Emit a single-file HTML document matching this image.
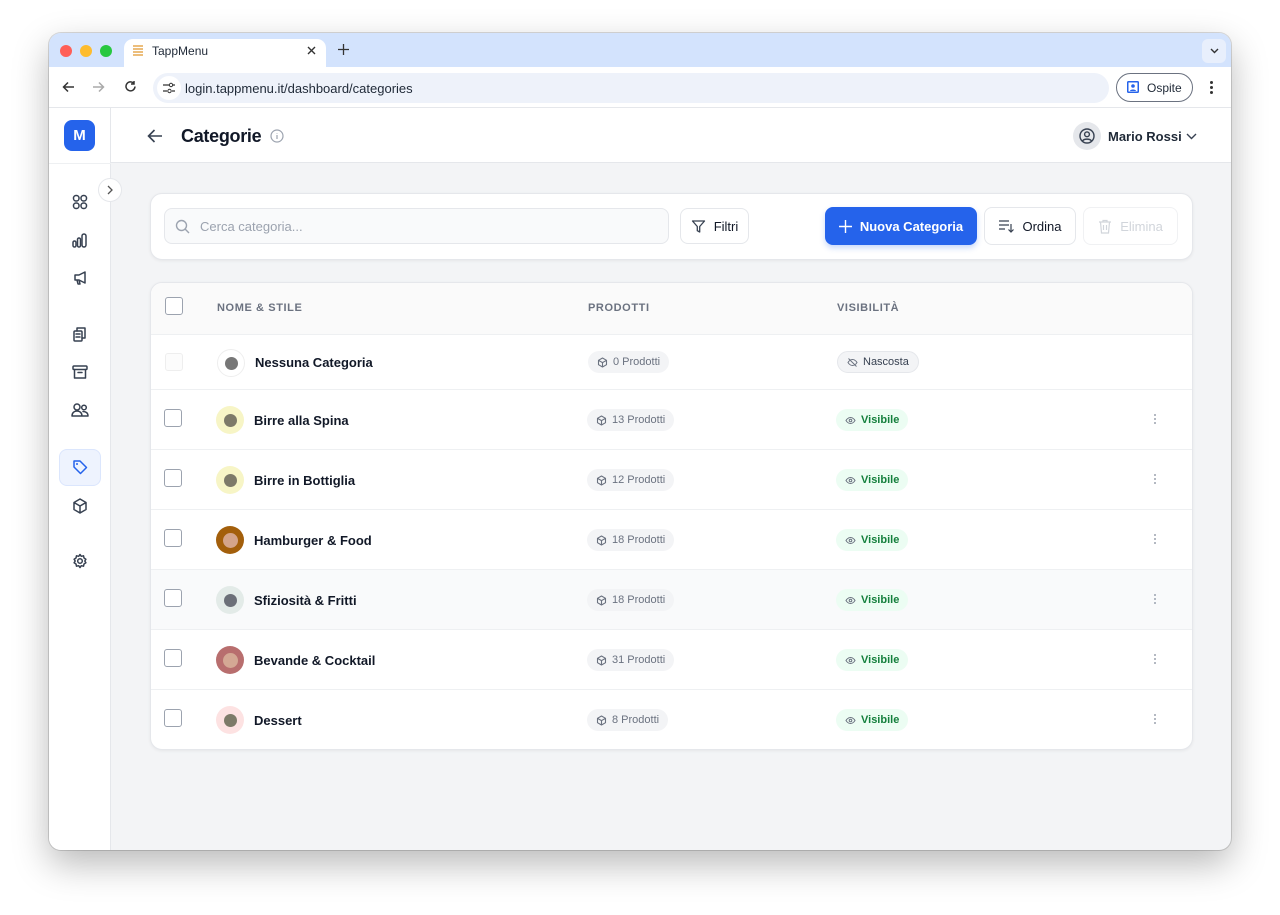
<!DOCTYPE html>
<html><head><meta charset="utf-8"><style>
*{box-sizing:border-box;margin:0;padding:0}
body{width:1280px;height:915px;background:#fff;font-family:"Liberation Sans",sans-serif;position:relative;overflow:hidden;color:#111827}
.a{position:absolute}
.win{left:49px;top:33px;width:1182px;height:817px;border-radius:12px;overflow:hidden;background:#f3f4f6;box-shadow:0 14px 36px rgba(0,0,0,.28),0 0 0 1px rgba(0,0,0,.14)}
svg{display:block}
.ic{stroke:#374151;fill:none;stroke-width:1.5;stroke-linecap:round;stroke-linejoin:round}
.card{background:#fff;border:1px solid #e5e7eb;border-radius:12px;box-shadow:0 1px 3px rgba(0,0,0,.06)}
.btn{border:1px solid #e5e7eb;border-radius:8px;background:#fff;display:flex;align-items:center;justify-content:center;gap:8px;font-size:13px;font-weight:bold;color:#111827}
.row{position:absolute;left:0;width:1043px;border-top:1px solid #eef0f2}
.cb{position:absolute;left:14px;width:18px;height:18px;border:1.5px solid #9ca3af;border-radius:3px;background:#fff}
.dot{position:absolute;left:66px;width:28px;height:28px;border-radius:50%;display:flex;align-items:center;justify-content:center}
.dot i{width:13px;height:13px;border-radius:50%;display:block}
.nm{position:absolute;left:104px;font-size:13px;font-weight:bold;color:#111827}
.pill{position:absolute;height:22px;border-radius:11px;display:flex;align-items:center;gap:5px;padding:0 9px;font-size:11px}
.pr{left:437px;background:#f3f4f6;color:#6b7280}
.vis{left:686px;background:#ecfdf3;color:#15803d;font-weight:bold}
.dots{position:absolute;left:1004px;width:4px}
.dots b{display:block;width:2px;height:2px;background:#9ca3af;border-radius:1px;margin:0 0 2px 0}
.r2{position:absolute;left:151px;width:1041px;height:60px;border-top:1px solid #eef0f2}
.r2 .cb{left:13px}.r2 .dot{left:65px}.r2 .nm{left:103px}.r2 .pr{left:436px}.r2 .vis{left:685px}.r2 .dots{left:1003px}
</style></head><body>
<div class="a win">
 <div class="a" style="left:0;top:0;width:1182px;height:34px;background:#d3e3fd"></div>
 <div class="a" style="left:11px;top:12px;width:12px;height:12px;border-radius:50%;background:#ff5f57"></div>
 <div class="a" style="left:31px;top:12px;width:12px;height:12px;border-radius:50%;background:#febc2e"></div>
 <div class="a" style="left:51px;top:12px;width:12px;height:12px;border-radius:50%;background:#28c840"></div>
 <div class="a" style="left:75px;top:6px;width:202px;height:30px;background:#fff;border-radius:9px 9px 0 0"></div>
 <svg class="a" style="left:83px;top:11px" width="12" height="12"><path d="M1 2h10M1 5h10M1 8h10M1 11h10" stroke="#e0962e" stroke-width="1.2"/></svg>
 <div class="a" style="left:103px;top:11px;font-size:12px;color:#1f2937">TappMenu</div>
 <svg class="a" style="left:258px;top:13px" width="9" height="9"><path d="M1 1l7 7M8 1l-7 7" stroke="#333" stroke-width="1.4"/></svg>
 <svg class="a" style="left:289px;top:11px" width="11" height="11"><path d="M5.5 0v11M0 5.5h11" stroke="#333" stroke-width="1.3"/></svg>
 <div class="a" style="left:1153px;top:6px;width:24px;height:24px;border-radius:6px;background:#e8effc"></div>
 <svg class="a" style="left:1161px;top:15px" width="9" height="6"><path d="M1 1l3.5 3.5L8 1" stroke="#333" stroke-width="1.4" fill="none"/></svg>
 <div class="a" style="left:0;top:34px;width:1182px;height:41px;background:#fff;border-bottom:1px solid #e5e7eb"></div>
 <svg class="a" style="left:13px;top:48px" width="13" height="12"><path d="M12 6H1.5M6 1.5L1.5 6 6 10.5" stroke="#333" stroke-width="1.5" fill="none"/></svg>
 <svg class="a" style="left:43px;top:48px" width="13" height="12"><path d="M1 6h10.5M7 1.5L11.5 6 7 10.5" stroke="#aaa" stroke-width="1.5" fill="none"/></svg>
 <svg class="a" style="left:75px;top:47px" width="13" height="13"><path d="M11 6.5A4.5 4.5 0 1 1 9.5 3M10 1v3H7" stroke="#333" stroke-width="1.5" fill="none"/></svg>
 <div class="a" style="left:104px;top:40px;width:956px;height:30px;border-radius:15px;background:#eef2fa"></div>
 <div class="a" style="left:108px;top:43px;width:24px;height:24px;border-radius:12px;background:#fff"></div>
 <svg class="a" style="left:113px;top:49px" width="14" height="12"><path d="M1 3h6M1 9h4M10 9h3M11 3h2" stroke="#333" stroke-width="1.3"/><circle cx="9" cy="3" r="1.7" stroke="#333" fill="none"/><circle cx="7.5" cy="9" r="1.7" stroke="#333" fill="none"/></svg>
 <div class="a" style="left:136px;top:48px;font-size:13px;color:#1f2937">login.tappmenu.it/dashboard/categories</div>
 <div class="a" style="left:1067px;top:40px;width:77px;height:29px;border:1px solid #6b7280;border-radius:15px"></div>
 <svg class="a" style="left:1077px;top:47px" width="14" height="14"><rect x="1" y="1" width="12" height="12" rx="1.5" fill="#2563eb"/><rect x="2.5" y="2.5" width="9" height="9" fill="#fff"/><circle cx="7" cy="6" r="1.8" fill="#2563eb"/><path d="M4 11c0-2 6-2 6 0z" fill="#2563eb"/></svg>
 <div class="a" style="left:1098px;top:48px;font-size:12px;color:#1f2937">Ospite</div>
 <div class="a" style="left:1161px;top:48px;width:3px"><div style="width:3px;height:3px;background:#333;border-radius:2px;margin-bottom:2px"></div><div style="width:3px;height:3px;background:#333;border-radius:2px;margin-bottom:2px"></div><div style="width:3px;height:3px;background:#333;border-radius:2px"></div></div>
 <div class="a" style="left:0;top:75px;width:62px;height:742px;background:#fff;border-right:1px solid #e5e7eb"></div>
 <div class="a" style="left:0;top:130px;width:62px;border-top:1px solid #eef0f2"></div>
 <div class="a" style="left:15px;top:87px;width:31px;height:31px;border-radius:8px;background:#2563eb;color:#fff;font-weight:bold;font-size:15px;display:flex;align-items:center;justify-content:center">M</div>
 <div class="a" style="left:49px;top:145px;width:24px;height:24px;border-radius:12px;background:#fff;border:1px solid #e5e7eb"></div>
 <svg class="a" style="left:57px;top:152px" width="8" height="10"><path d="M2 1l4 4-4 4" stroke="#555" stroke-width="1.3" fill="none"/></svg>
 <svg class="a ic" style="left:23px;top:161px" width="16" height="16"><rect x="1.5" y="1.5" width="5.5" height="5.5" rx="2.5"/><rect x="9" y="1.5" width="5.5" height="5.5" rx="2.5"/><rect x="1.5" y="9" width="5.5" height="5.5" rx="2.5"/><rect x="9" y="9" width="5.5" height="5.5" rx="2.5"/></svg>
 <svg class="a ic" style="left:23px;top:199px" width="16" height="16"><rect x="1" y="9" width="3" height="6" rx="1.5"/><rect x="5.5" y="6" width="3" height="9" rx="1.5"/><rect x="10" y="2" width="4" height="13" rx="2"/></svg>
 <svg class="a ic" style="left:23px;top:237px" width="16" height="16"><path d="M3 5h4l6-3v11l-6-3H3zM5 10l1 4h2l-1-4"/></svg>
 <svg class="a ic" style="left:23px;top:293px" width="16" height="16"><rect x="2" y="5" width="8" height="10" rx="1"/><path d="M5 5V2h8v10h-3M4 8h4M4 11h4"/></svg>
 <svg class="a ic" style="left:23px;top:331px" width="16" height="16"><rect x="1" y="2" width="14" height="3.5" rx="1"/><path d="M2.5 5.5V14h11V5.5M6 8.5h4"/></svg>
 <svg class="a ic" style="left:22px;top:369px" width="18" height="16"><circle cx="6" cy="5" r="3"/><circle cx="13" cy="5.5" r="2.3"/><path d="M1 14c0-3.5 2.5-5 5-5s5 1.5 5 5zM12 9.5c3 0 5 1.5 5 4.5h-5"/></svg>
 <div class="a" style="left:10px;top:416px;width:42px;height:37px;border-radius:8px;background:#eef3fe;border:1px solid #dbe6fd"></div>
 <svg class="a" style="left:23px;top:426px" width="16" height="16"><path d="M2 2h6l6.5 6.5-6 6L2 8z" stroke="#2563eb" stroke-width="1.5" fill="none" stroke-linejoin="round"/><circle cx="5" cy="5" r="1" fill="#2563eb"/></svg>
 <svg class="a ic" style="left:23px;top:465px" width="16" height="16"><path d="M8 1l6 3.5v7L8 15l-6-3.5v-7zM2 4.5L8 8l6-3.5M8 8v7"/></svg>
 <svg class="a ic" style="left:23px;top:520px" width="16" height="16"><circle cx="8" cy="8" r="2.3"/><path d="M8 1.5l1.3 1.8 2.2-.5.5 2.2 1.9 1.2-1.1 1.8 1.1 1.8-1.9 1.2-.5 2.2-2.2-.5L8 14.5l-1.3-1.8-2.2.5-.5-2.2-1.9-1.2L3.2 8 2.1 6.2 4 5l.5-2.2 2.2.5z"/></svg>
 <div class="a" style="left:62px;top:75px;width:1120px;height:55px;background:#fff;border-bottom:1px solid #e5e7eb"></div>
 <svg class="a" style="left:98px;top:96px" width="16" height="14"><path d="M15 7H1.5M7.5 1L1.5 7l6 6" stroke="#374151" stroke-width="1.6" fill="none"/></svg>
 <div class="a" style="left:132px;top:93px;font-size:18px;font-weight:bold;color:#111827;letter-spacing:-.3px">Categorie</div>
 <svg class="a" style="left:221px;top:96px" width="14" height="14"><circle cx="7" cy="7" r="6" stroke="#9ca3af" fill="none" stroke-width="1.2"/><path d="M7 6v4M7 4v.5" stroke="#9ca3af" stroke-width="1.2"/></svg>
 <div class="a" style="left:1024px;top:89px;width:28px;height:28px;border-radius:14px;background:#e5e7eb"></div>
 <svg class="a" style="left:1030px;top:95px" width="16" height="16"><circle cx="8" cy="8" r="7" stroke="#374151" fill="none" stroke-width="1.4"/><circle cx="8" cy="6.3" r="2.4" stroke="#374151" fill="none" stroke-width="1.4"/><path d="M3.5 13c1.5-2.5 7.5-2.5 9 0" stroke="#374151" fill="none" stroke-width="1.4"/></svg>
 <div class="a" style="left:1059px;top:96px;font-size:13px;font-weight:bold;color:#1f2937">Mario Rossi</div>
 <svg class="a" style="left:1137px;top:100px" width="11" height="7"><path d="M1 1l4.5 4.5L10 1" stroke="#374151" stroke-width="1.4" fill="none"/></svg>
 <div class="a card" style="left:101px;top:160px;width:1043px;height:67px"></div>
 <div class="a" style="left:115px;top:175px;width:505px;height:36px;border:1px solid #e5e7eb;border-radius:8px;background:#f9fafb"></div>
 <svg class="a" style="left:126px;top:186px" width="15" height="15"><circle cx="6.5" cy="6.5" r="5" stroke="#9ca3af" fill="none" stroke-width="1.4"/><path d="M10.3 10.3L14 14" stroke="#9ca3af" stroke-width="1.4"/></svg>
 <div class="a" style="left:151px;top:186px;font-size:13px;color:#9ca3af">Cerca categoria...</div>
 <div class="a btn" style="left:631px;top:175px;width:69px;height:36px"><svg width="15" height="15"><path d="M1.5 2h12l-4.8 5.5V13l-2.4-1.3V7.5z" stroke="#374151" fill="none" stroke-width="1.3" stroke-linejoin="round"/></svg><span style="font-weight:normal;color:#111827">Filtri</span></div>
 <div class="a btn" style="left:776px;top:174px;width:152px;height:38px;background:#2563eb;border-color:#2563eb;color:#fff;box-shadow:0 3px 6px rgba(37,99,235,.25)"><svg width="13" height="13"><path d="M6.5 0v13M0 6.5h13" stroke="#fff" stroke-width="1.4"/></svg>Nuova Categoria</div>
 <div class="a btn" style="left:935px;top:174px;width:92px;height:38px;font-weight:normal"><svg width="16" height="14"><path d="M1 2h10M1 6h10M1 10h6M13 5v8M10.5 10.5L13 13l2.5-2.5" stroke="#374151" fill="none" stroke-width="1.2"/></svg>Ordina</div>
 <div class="a btn" style="left:1034px;top:174px;width:95px;height:38px;font-weight:normal;color:#d1d5db;border-color:#f0f1f3"><svg width="14" height="15"><path d="M1 3h12M5 3V1.5h4V3M2.5 3l1 11h7l1-11M5.5 6v5M8.5 6v5" stroke="#d1d5db" fill="none" stroke-width="1.2"/></svg>Elimina</div>
 <div class="a card" style="left:101px;top:249px;width:1043px;height:468px;overflow:hidden">
  <div class="a" style="left:0;top:0;width:1043px;height:51px;background:#fafafa"></div>
  <div class="cb" style="top:14px"></div>
  <div class="a" style="left:66px;top:19px;font-size:11px;font-weight:bold;color:#6b7280;letter-spacing:.6px">NOME &amp; STILE</div>
  <div class="a" style="left:437px;top:19px;font-size:11px;font-weight:bold;color:#6b7280;letter-spacing:.6px">PRODOTTI</div>
  <div class="a" style="left:686px;top:19px;font-size:11px;font-weight:bold;color:#6b7280;letter-spacing:.6px">VISIBILITÀ</div>
  <div class="row" style="top:51px;height:56px">
   <div class="cb" style="top:18px;border-color:#eee;background:#fcfcfc"></div>
   <div class="dot" style="top:14px;background:#fff;border:1px solid #eee"><i style="background:#777"></i></div>
   <div class="nm" style="top:20px">Nessuna Categoria</div>
   <div class="pill pr" style="top:16px"><svg width="11" height="11" class="ic" style="stroke:#6b7280;stroke-width:1.1"><path d="M5.5 1l4 2.3v4.4L5.5 10l-4-2.3V3.3zM1.5 3.3l4 2.3 4-2.3M5.5 5.6V10"/></svg>0 Prodotti</div>
   <div class="pill" style="top:16px;left:686px;background:#f3f4f6;color:#374151;border:1px solid #e5e7eb"><svg width="11" height="11"><path d="M1 5.5s1.8-3 4.5-3 4.5 3 4.5 3-1.8 3-4.5 3-4.5-3-4.5-3zM1.5 1.5l8 8" stroke="#6b7280" fill="none" stroke-width="1"/></svg>Nascosta</div>
  </div>
 </div>
</div>
<div class="r2" style="top:389px"><div class="cb" style="top:19px"></div><div class="dot" style="top:16px;background:#f7f5c6"><i style="background:#7d7a68"></i></div><div class="nm" style="top:23px">Birre alla Spina</div><div class="pill pr" style="top:19px"><svg width="11" height="11" class="ic" style="stroke:#6b7280;stroke-width:1.1"><path d="M5.5 1l4 2.3v4.4L5.5 10l-4-2.3V3.3zM1.5 3.3l4 2.3 4-2.3M5.5 5.6V10"/></svg>13 Prodotti</div><div class="pill vis" style="top:19px"><svg width="11" height="11"><path d="M1 5.5s1.8-3 4.5-3 4.5 3 4.5 3-1.8 3-4.5 3-4.5-3-4.5-3z" stroke="#6b7280" fill="none"/><circle cx="5.5" cy="5.5" r="1.3" stroke="#6b7280" fill="none"/></svg>Visibile</div><div class="dots" style="top:24px"><b></b><b></b><b></b></div></div>
<div class="r2" style="top:449px"><div class="cb" style="top:19px"></div><div class="dot" style="top:16px;background:#f7f5c6"><i style="background:#7d7a68"></i></div><div class="nm" style="top:23px">Birre in Bottiglia</div><div class="pill pr" style="top:19px"><svg width="11" height="11" class="ic" style="stroke:#6b7280;stroke-width:1.1"><path d="M5.5 1l4 2.3v4.4L5.5 10l-4-2.3V3.3zM1.5 3.3l4 2.3 4-2.3M5.5 5.6V10"/></svg>12 Prodotti</div><div class="pill vis" style="top:19px"><svg width="11" height="11"><path d="M1 5.5s1.8-3 4.5-3 4.5 3 4.5 3-1.8 3-4.5 3-4.5-3-4.5-3z" stroke="#6b7280" fill="none"/><circle cx="5.5" cy="5.5" r="1.3" stroke="#6b7280" fill="none"/></svg>Visibile</div><div class="dots" style="top:24px"><b></b><b></b><b></b></div></div>
<div class="r2" style="top:509px"><div class="cb" style="top:19px"></div><div class="dot" style="top:16px;background:#a35f0b"><i style="background:#d4a48a;width:15px;height:15px"></i></div><div class="nm" style="top:23px">Hamburger &amp; Food</div><div class="pill pr" style="top:19px"><svg width="11" height="11" class="ic" style="stroke:#6b7280;stroke-width:1.1"><path d="M5.5 1l4 2.3v4.4L5.5 10l-4-2.3V3.3zM1.5 3.3l4 2.3 4-2.3M5.5 5.6V10"/></svg>18 Prodotti</div><div class="pill vis" style="top:19px"><svg width="11" height="11"><path d="M1 5.5s1.8-3 4.5-3 4.5 3 4.5 3-1.8 3-4.5 3-4.5-3-4.5-3z" stroke="#6b7280" fill="none"/><circle cx="5.5" cy="5.5" r="1.3" stroke="#6b7280" fill="none"/></svg>Visibile</div><div class="dots" style="top:24px"><b></b><b></b><b></b></div></div>
<div class="r2" style="top:569px;background:#f9fafb"><div class="cb" style="top:19px"></div><div class="dot" style="top:16px;background:#e3ebe8"><i style="background:#6b6f78"></i></div><div class="nm" style="top:23px">Sfiziosità &amp; Fritti</div><div class="pill pr" style="top:19px"><svg width="11" height="11" class="ic" style="stroke:#6b7280;stroke-width:1.1"><path d="M5.5 1l4 2.3v4.4L5.5 10l-4-2.3V3.3zM1.5 3.3l4 2.3 4-2.3M5.5 5.6V10"/></svg>18 Prodotti</div><div class="pill vis" style="top:19px"><svg width="11" height="11"><path d="M1 5.5s1.8-3 4.5-3 4.5 3 4.5 3-1.8 3-4.5 3-4.5-3-4.5-3z" stroke="#6b7280" fill="none"/><circle cx="5.5" cy="5.5" r="1.3" stroke="#6b7280" fill="none"/></svg>Visibile</div><div class="dots" style="top:24px"><b></b><b></b><b></b></div></div>
<div class="r2" style="top:629px"><div class="cb" style="top:19px"></div><div class="dot" style="top:16px;background:#b86e6e"><i style="background:#d4a894;width:15px;height:15px"></i></div><div class="nm" style="top:23px">Bevande &amp; Cocktail</div><div class="pill pr" style="top:19px"><svg width="11" height="11" class="ic" style="stroke:#6b7280;stroke-width:1.1"><path d="M5.5 1l4 2.3v4.4L5.5 10l-4-2.3V3.3zM1.5 3.3l4 2.3 4-2.3M5.5 5.6V10"/></svg>31 Prodotti</div><div class="pill vis" style="top:19px"><svg width="11" height="11"><path d="M1 5.5s1.8-3 4.5-3 4.5 3 4.5 3-1.8 3-4.5 3-4.5-3-4.5-3z" stroke="#6b7280" fill="none"/><circle cx="5.5" cy="5.5" r="1.3" stroke="#6b7280" fill="none"/></svg>Visibile</div><div class="dots" style="top:24px"><b></b><b></b><b></b></div></div>
<div class="r2" style="top:689px"><div class="cb" style="top:19px"></div><div class="dot" style="top:16px;background:#fde2e2"><i style="background:#7d7a68"></i></div><div class="nm" style="top:23px">Dessert</div><div class="pill pr" style="top:19px"><svg width="11" height="11" class="ic" style="stroke:#6b7280;stroke-width:1.1"><path d="M5.5 1l4 2.3v4.4L5.5 10l-4-2.3V3.3zM1.5 3.3l4 2.3 4-2.3M5.5 5.6V10"/></svg>8 Prodotti</div><div class="pill vis" style="top:19px"><svg width="11" height="11"><path d="M1 5.5s1.8-3 4.5-3 4.5 3 4.5 3-1.8 3-4.5 3-4.5-3-4.5-3z" stroke="#6b7280" fill="none"/><circle cx="5.5" cy="5.5" r="1.3" stroke="#6b7280" fill="none"/></svg>Visibile</div><div class="dots" style="top:24px"><b></b><b></b><b></b></div></div>
</body></html>
